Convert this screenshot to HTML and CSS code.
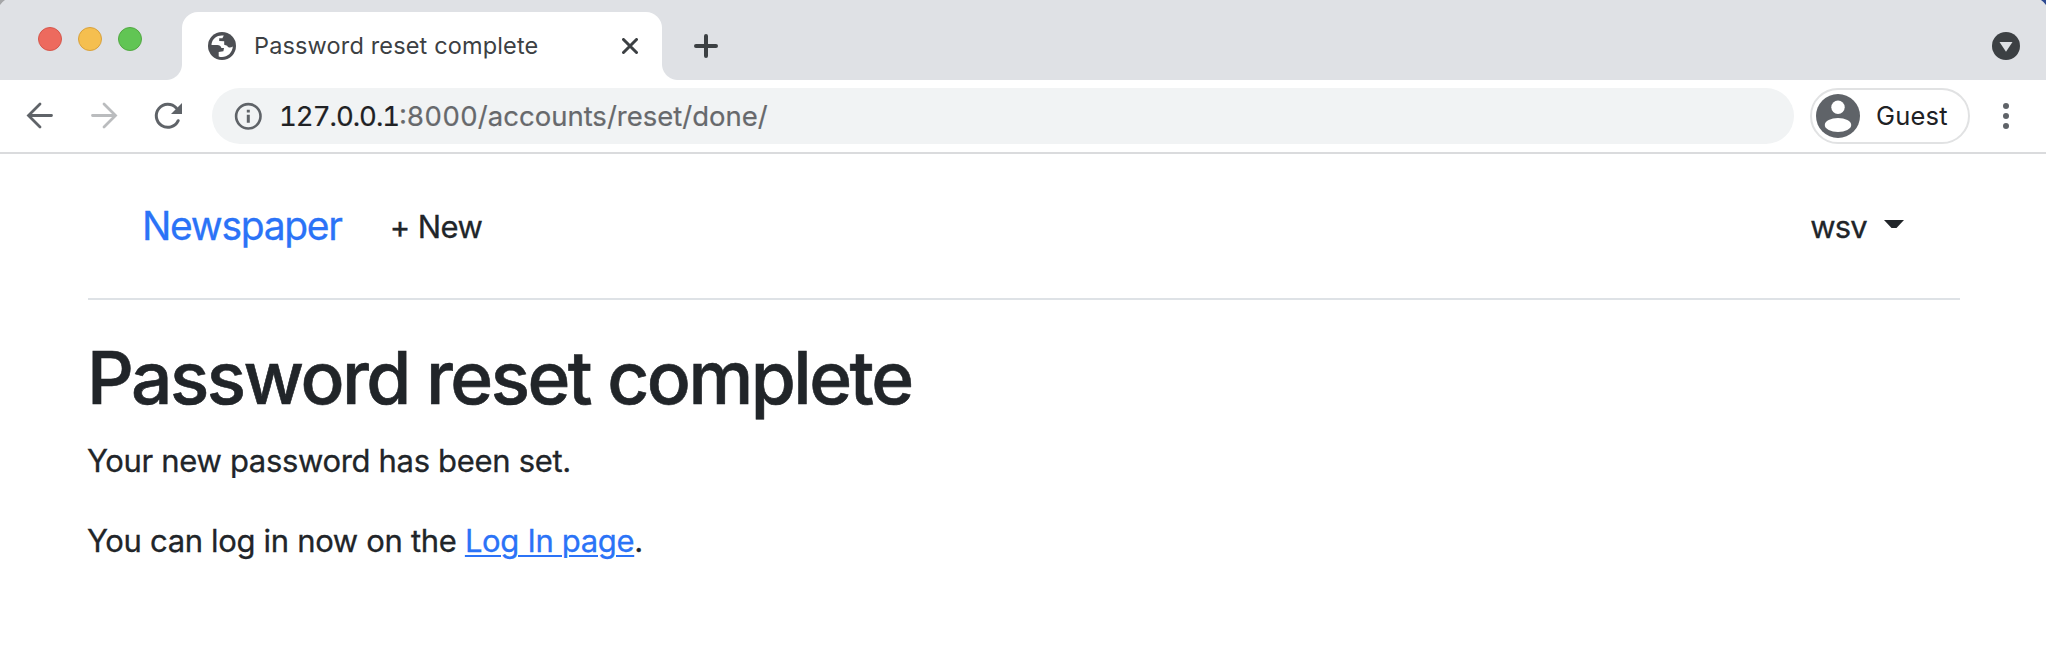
FILE: index.html
```html
<!DOCTYPE html>
<html lang="en">
<head>
<meta charset="utf-8">
<title>Password reset complete</title>
<link rel="stylesheet" href="styles.css">
</head>
<body>
<div class="tab-strip">
  <svg class="corner corner-left" viewBox="0 0 5 5"><path d="M0 0H5Q2 2 0 5Z" fill="#a5a6a8"/></svg>
  <svg class="corner corner-right" viewBox="0 0 5 5"><path d="M0 0H5V5Q3 2 0 0Z" fill="#2d4a92"/></svg>
  <div class="lights">
    <span class="light red"></span><span class="light yellow"></span><span class="light green"></span>
  </div>
  <div class="tab">
    <svg class="globe" viewBox="0 0 28 28">
      <circle cx="14" cy="14" r="14" fill="#4d4f54"/>
      <path d="M15.8 3.6C10 2.5 4.6 6.1 3.6 11.5L3.5 13H9.3C11.4 13 13 14.2 13.4 16H16L15.4 19.2L10.7 20V24.5C17.3 26.6 24.3 22.1 24.8 14.5C22.5 16.4 19.7 15.6 19.2 13.8L16.2 12.8V9.3L11.2 9.1V6.3H14.4Z" fill="#fff"/>
    </svg>
    <span class="tab-title">Password reset complete</span>
    <svg class="close" viewBox="0 0 16 16"><path d="M1.5 1.5L14.5 14.5M14.5 1.5L1.5 14.5" stroke="#3c4043" stroke-width="3" stroke-linecap="round"/></svg>
  </div>
  <svg class="plus" viewBox="0 0 24 24"><path d="M12 2V22M2 12H22" stroke="#3c4043" stroke-width="4" stroke-linecap="round"/></svg>
  <svg class="search-tabs" viewBox="0 0 28 28"><circle cx="14" cy="14" r="14" fill="#3c4043"/><path d="M7.5 10H20.5L14 19.7Z" fill="#dfe1e5"/></svg>
</div>
<div class="toolbar">
  <svg class="nav-icon" viewBox="0 0 28 28"><path d="M25.5 13.5H3M14 2L2.5 13.5L14 25" fill="none" stroke="#5f6368" stroke-width="2.8" stroke-linecap="round"/></svg>
  <svg class="nav-icon" viewBox="0 0 28 28"><path d="M2.5 13.5H25M14 2L25.5 13.5L14 25" fill="none" stroke="#babcbe" stroke-width="2.8" stroke-linecap="round"/></svg>
  <svg class="nav-icon" viewBox="0 0 28 28"><path d="M24.2 18.7A11.5 11.5 0 1 1 22.3 6.1" fill="none" stroke="#5f6368" stroke-width="3" stroke-linecap="round"/><path d="M28 1V12H17Z" fill="#5f6368"/></svg>
  <div class="address">
    <svg class="info" viewBox="0 0 28 28"><circle cx="14.3" cy="14.3" r="12.2" fill="none" stroke="#5f6368" stroke-width="2.6"/><path d="M14.3 12.8V20.8M14.3 7.8V10.5" stroke="#5f6368" stroke-width="3"/></svg>
    <span class="url"><span class="host">127.0.0.1</span>:8000/accounts/reset/done/</span>
  </div>
  <div class="profile">
    <svg class="avatar" viewBox="0 0 44 44"><circle cx="22" cy="22" r="22" fill="#5f6368"/><circle cx="22" cy="13.3" r="6.7" fill="#fff"/><ellipse cx="22" cy="31" rx="13.2" ry="7" fill="#fff"/></svg>
    <span class="guest">Guest</span>
  </div>
  <svg class="menu" viewBox="0 0 6 26"><circle cx="3" cy="3" r="3"/><circle cx="3" cy="13" r="3"/><circle cx="3" cy="23" r="3"/></svg>
</div>
<div class="page">
  <header class="site-header">
    <a class="brand">Newspaper</a>
    <a class="new">+ New</a>
    <a class="user"><span>wsv</span><svg class="caret" viewBox="0 0 20 8"><path d="M0 0H20L12.5 8H7.5Z" fill="#212529"/></svg></a>
  </header>
  <h1 class="title">Password reset complete</h1>
  <p class="text first">Your new password has been set.</p>
  <p class="text second">You can log in now on the <a class="link">Log In page</a>.</p>
</div>
</body>
</html>
```
FILE: styles.css
```css
* { box-sizing: border-box; }
body { margin: 0; height: 654px; overflow: hidden; background: #fff; color: #212529; font-family: Inter, "Liberation Sans", sans-serif; }
svg { display: block; flex: none; }
span, a { white-space: nowrap; }

.tab-strip { position: relative; display: flex; height: 80px; padding: 12px 26px 0 38px; background: #dfe1e5; }
.corner { position: absolute; top: 0; width: 5px; height: 5px; }
.corner-left { left: 0; }
.corner-right { right: 0; }
.lights { display: flex; gap: 16px; width: 144px; padding-top: 15px; }
.light { width: 24px; height: 24px; border-radius: 50%; border: 1px solid; }
.red { background: #ed6a5e; border-color: #d5574c; }
.yellow { background: #f5bf4f; border-color: #d8a13d; }
.green { background: #61c554; border-color: #52a842; }
.tab { position: relative; display: flex; align-items: center; width: 480px; height: 68px; padding: 0 24px 0 26px; background: #fff; border-radius: 16px 16px 0 0; }
.tab::before, .tab::after { content: ""; position: absolute; bottom: 0; width: 16px; height: 16px; }
.tab::before { left: -16px; background: radial-gradient(circle at 0 0, transparent 15.5px, #fff 16.5px); }
.tab::after { right: -16px; background: radial-gradient(circle at 100% 0, transparent 15.5px, #fff 16.5px); }
.globe { width: 28px; height: 28px; }
.tab-title { margin-left: 18px; font-size: 23.5px; line-height: 28px; letter-spacing: 0.15px; color: #3c4043; }
.close { width: 16px; height: 16px; margin-left: auto; }
.plus { width: 24px; height: 24px; margin: 22px 0 0 32px; }
.search-tabs { width: 28px; height: 28px; margin: 20px 0 0 auto; }

.toolbar { display: flex; align-items: center; height: 74px; padding: 0 37px 0 26px; border-bottom: 2px solid #dadbdd; }
.nav-icon { width: 28px; height: 28px; margin-right: 36px; }
.address { display: flex; align-items: center; flex: 1; height: 56px; margin-left: -6px; padding-left: 22px; border-radius: 28px; background: #f1f3f4; }
.info { width: 28px; height: 28px; }
.url { margin-left: 17px; font-size: 27.5px; line-height: 34px; color: #67696c; font-variant-numeric: tabular-nums; -webkit-text-stroke: 0.2px; }
.host { letter-spacing: -1px; color: #202124; }
.profile { display: flex; align-items: center; width: 160px; height: 56px; margin-left: 16px; padding-left: 4px; border: 2px solid #e1e2e3; border-radius: 28px; }
.avatar { width: 44px; height: 44px; }
.guest { margin-left: 16px; font-size: 25.5px; line-height: 32px; letter-spacing: 0.2px; color: #202124; }
.menu { width: 6px; height: 26px; margin-left: 33px; fill: #5f6368; }

.page { padding: 0 86px 0 88px; }
.site-header { display: flex; align-items: center; height: 146px; padding: 0 56px 0 54px; border-bottom: 2px solid #dee2e6; }
.brand { font-size: 39px; line-height: 48px; letter-spacing: -1.3px; color: #2b73f7; -webkit-text-stroke: 0.3px; }
.new, .user { padding-top: 2px; font-size: 31px; line-height: 48px; letter-spacing: -0.55px; -webkit-text-stroke: 0.3px; }
.new { margin-left: 48px; }
.user { display: flex; align-items: center; gap: 17px; margin-left: auto; letter-spacing: -0.8px; }
.caret { width: 20px; height: 8px; margin-top: -6px; }
.title { margin: 33px 0 0 -1px; font-size: 73px; font-weight: 500; line-height: 90px; letter-spacing: -2.5px; -webkit-text-stroke: 0.6px; }
.text { margin: 0 0 0 -1px; font-size: 31px; line-height: 48px; letter-spacing: -0.33px; -webkit-text-stroke: 0.3px; }
.first { margin-top: 14px; }
.second { margin-top: 32px; }
.link { color: #2b73f7; text-decoration: underline; text-decoration-thickness: 2px; text-underline-offset: 3px; }
```
